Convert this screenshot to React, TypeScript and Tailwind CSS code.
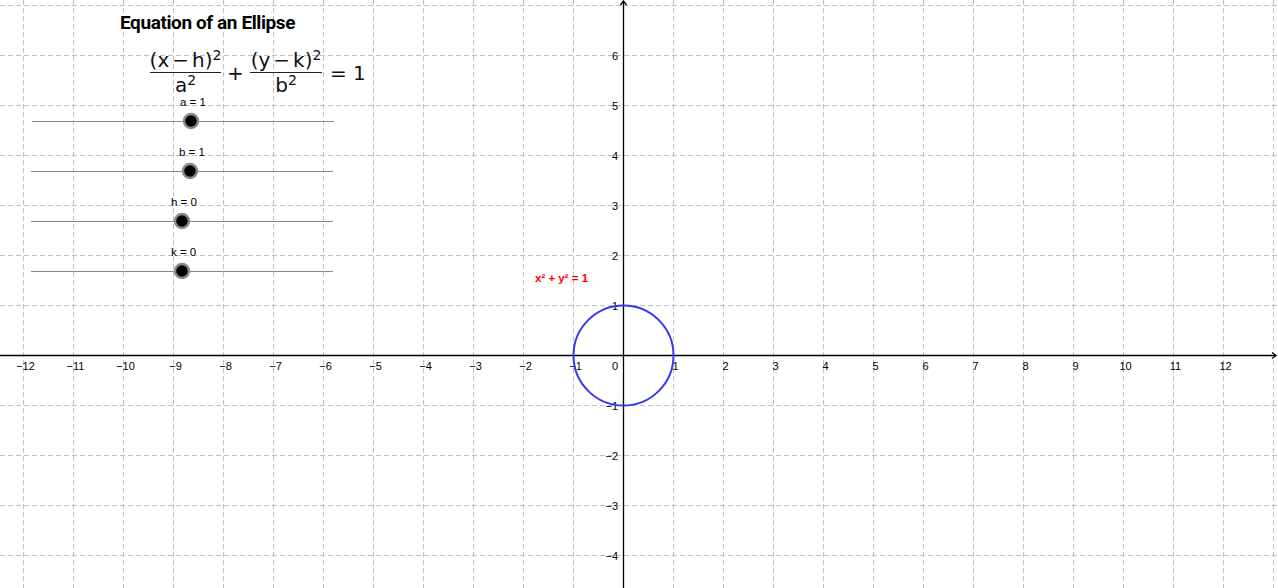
import React from "react";

const X0 = 623.5;
const Y0 = 355.5;
const U = 50;

const xTicks = Array.from({ length: 25 }, (_, i) => i - 12).filter((k) => k !== 0);
const yTicks = Array.from({ length: 11 }, (_, i) => 6 - i).filter((k) => k !== 0);

const sliders = [
  { name: "a", value: 1, x: 191, y: 121.5, x1: 32, x2: 334 },
  { name: "b", value: 1, x: 190, y: 171.5, x1: 31, x2: 333 },
  { name: "h", value: 0, x: 182, y: 221.5, x1: 31, x2: 333 },
  { name: "k", value: 0, x: 182, y: 271.5, x1: 31, x2: 333 },
];

const fmt = (n: number) => (n < 0 ? `\u2212${Math.abs(n)}` : `${n}`);

function Fraction({ top, bottom, width }: { top: React.ReactNode; bottom: React.ReactNode; width: string }) {
  return (
    <div className={`flex flex-col items-center ${width}`}>
      <div className="h-[24px] leading-[24px] whitespace-nowrap">{top}</div>
      <div className="h-px w-full bg-[#222]" />
      <div className="h-[24px] leading-[24px] whitespace-nowrap">{bottom}</div>
    </div>
  );
}

const Sup = ({ children }: { children: React.ReactNode }) => (
  <span className="text-[14px] relative -top-[7px] leading-none">{children}</span>
);

const Minus = () => <span className="mx-[3px]">{"\u2212"}</span>;

export default function App() {
  return (
    <div className="relative w-[1278px] h-[588px] bg-white overflow-hidden">
      <svg width="1278" height="588" className="absolute inset-0" fontFamily="'Liberation Sans', Arial, sans-serif">
        {/* grid */}
        <g stroke="#c0c0c0" strokeWidth="1" strokeDasharray="5 3">
          {Array.from({ length: 26 }, (_, i) => i - 12).map((k) => (
            <line key={`v${k}`} x1={X0 + k * U} y1={0} x2={X0 + k * U} y2={588} />
          ))}
          {Array.from({ length: 12 }, (_, i) => i - 4).map((k) => (
            <line key={`h${k}`} x1={0} y1={Y0 - k * U} x2={1278} y2={Y0 - k * U} />
          ))}
        </g>

        {/* axes */}
        <g stroke="#000" strokeWidth="1.3" fill="none">
          <line x1={0} y1={Y0} x2={1276} y2={Y0} />
          <line x1={X0} y1={1} x2={X0} y2={588} />
          <polyline points={`1272,${Y0 - 3} 1276,${Y0} 1272,${Y0 + 3}`} />
          <polyline points={`${X0 - 3},5 ${X0},1 ${X0 + 3},5`} />
        </g>

        {/* tick labels */}
        <g fontSize="11" fill="#000">
          {xTicks.map((k) => (
            <text key={`xl${k}`} x={X0 + k * U + 2} y={369.5} textAnchor="middle">
              {fmt(k)}
            </text>
          ))}
          {yTicks.map((k) => (
            <text key={`yl${k}`} x={618} y={Y0 - k * U + 4.5} textAnchor="end">
              {fmt(k)}
            </text>
          ))}
          <text x={618} y={370} textAnchor="end">
            0
          </text>
        </g>

        {/* ellipse */}
        <circle cx={X0} cy={Y0} r={U} fill="none" stroke="#3838f4" strokeWidth="2" />
        <text x={535} y={282} fontSize="11.5" fill="#ff0000" fontWeight="bold">
          x² + y² = 1
        </text>

        {/* sliders */}
        {sliders.map((s) => (
          <g key={s.name}>
            <line x1={s.x1} y1={s.y} x2={s.x2} y2={s.y} stroke="#8a8a8a" strokeWidth="1" />
            <circle cx={s.x} cy={s.y - 0.5} r={7} fill="#000" stroke="#8a8a8a" strokeWidth="2.5" />
            <text x={s.x - 11} y={s.y - 15.5} fontSize="11.5" fill="#000">
              {s.name} = {s.value}
            </text>
          </g>
        ))}
      </svg>

      <div className="absolute left-[120px] top-[13px] font-['Roboto',sans-serif] font-bold text-[19px] leading-[19px] tracking-[-0.4px] text-black whitespace-nowrap">
        Equation of an Ellipse
      </div>

      <div className="absolute left-[150px] top-[48px] flex items-center font-['DejaVu_Sans',sans-serif] text-[20px] text-[#111]">
        <Fraction
          width="w-[71px]"
          top={
            <>
              (x<Minus />h)<Sup>2</Sup>
            </>
          }
          bottom={
            <>
              a<Sup>2</Sup>
            </>
          }
        />
        <span className="ml-[6px] w-[16px] text-center">+</span>
        <Fraction
          width="ml-[7px] w-[72px]"
          top={
            <>
              (y<Minus />k)<Sup>2</Sup>
            </>
          }
          bottom={
            <>
              b<Sup>2</Sup>
            </>
          }
        />
        <span className="ml-[8px] whitespace-nowrap">= 1</span>
      </div>
    </div>
  );
}
